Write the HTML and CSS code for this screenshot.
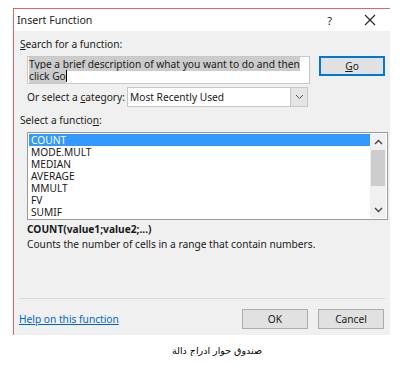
FILE: index.html
```html
<!DOCTYPE html>
<html>
<head>
<meta charset="utf-8">
<link rel="stylesheet" href="styles.css">
</head>
<body>
<div class="dialog">
  <div class="titlebar">
    <span class="title">Insert Function</span>
    <span class="help">?</span>
    <svg class="close" width="12" height="12" viewBox="0 0 12 12"><path d="M1 1 L11 11 M11 1 L1 11" stroke="#222" stroke-width="1.1" fill="none"/></svg>
  </div>
  <div class="content">
    <div class="label"><u>S</u>earch for a function:</div>
    <div class="search-row">
      <div class="textarea"><span class="sel">Type a brief description of what you want to do and then</span><br><span class="sel">click Go</span><span class="caret"></span></div>
      <div class="btn btn-default"><u>G</u>o</div>
    </div>
    <div class="cat-row">
      <span class="cat-label">Or select a <u>c</u>ategory:</span>
      <div class="select">
        <span class="select-text">Most Recently Used</span>
        <span class="select-arrow"><svg width="9" height="6" viewBox="0 0 9 6"><path d="M1 1 L4.5 4.5 L8 1" stroke="#555" stroke-width="1" fill="none"/></svg></span>
      </div>
    </div>
    <div class="label label2">Select a functio<u>n</u>:</div>
    <div class="listbox">
      <div class="items">
        <div class="item selected">COUNT</div>
        <div class="item">MODE.MULT</div>
        <div class="item">MEDIAN</div>
        <div class="item">AVERAGE</div>
        <div class="item">MMULT</div>
        <div class="item">FV</div>
        <div class="item">SUMIF</div>
      </div>
      <div class="scrollbar">
        <svg class="arrow" width="9" height="6" viewBox="0 0 9 6"><path d="M1 5 L4.5 1.5 L8 5" stroke="#444" stroke-width="1.4" fill="none"/></svg>
        <div class="track"><div class="thumb"></div></div>
        <svg class="arrow" width="9" height="6" viewBox="0 0 9 6"><path d="M1 1 L4.5 4.5 L8 1" stroke="#444" stroke-width="1.4" fill="none"/></svg>
      </div>
    </div>
    <div class="signature">COUNT(value1;value2;...)</div>
    <div class="desc">Counts the number of cells in a range that contain numbers.</div>
    <div class="spacer"></div>
    <div class="separator"></div>
    <div class="footer">
      <a class="link" href="#">Help on this function</a>
      <div class="buttons">
        <div class="btn">OK</div>
        <div class="btn">Cancel</div>
      </div>
    </div>
  </div>
</div>
<div class="caption">صندوق حوار ادراج دالة</div>
</body>
</html>
```

FILE: styles.css
```css
html, body {
  margin: 0;
  padding: 0;
  background: #ffffff;
}
body {
  font-family: "Noto Sans", "Open Sans", sans-serif;
  font-size: 10.2px;
  color: #1a1a1a;
}
.dialog {
  margin: 8px 0 0 13px;
  width: 376px;
  height: 326px;
  border-top: 1px solid #e06666;
  border-left: 1px solid #e06666;
  display: flex;
  flex-direction: column;
}
.titlebar {
  height: 22px;
  background: #ffffff;
  display: flex;
  align-items: center;
  padding-left: 3px;
}
.title {
  font-size: 10.6px;
  flex: 1;
}
.help {
  font-size: 11px;
  margin-right: 32px;
}
.close {
  margin-right: 14px;
}
.content {
  flex: 1;
  background: #f0f0f0;
  padding: 0 5px 0 5px;
  display: flex;
  flex-direction: column;
}
.label {
  line-height: 14px;
  margin-top: 6px;
  padding-left: 1px;
}
.label2 {
  margin-top: 6px;
}
.search-row {
  display: flex;
  align-items: flex-start;
  margin-top: 5px;
  padding-left: 8px;
}
.textarea {
  width: 280px;
  background: #ffffff;
  border: 1px solid #c8c8c8;
  line-height: 12px;
  padding: 1px 0 0 1px;
  height: 25px;
  white-space: nowrap;
  overflow: hidden;
}
.sel {
  background: #cccccc;
}
.caret {
  display: inline-block;
  width: 1px;
  height: 12px;
  background: #000;
  vertical-align: -2px;
}
.btn {
  width: 64px;
  height: 18px;
  border: 1px solid #adadad;
  background: #e1e1e1;
  text-align: center;
  line-height: 18px;
}
.btn-default {
  margin-left: 9px;
  border: 2px solid #0078d7;
  width: 62px;
  height: 16px;
  line-height: 16px;
}
.cat-row {
  display: flex;
  align-items: center;
  margin-top: 3px;
  padding-left: 8px;
}
.cat-label {
  flex: none;
  white-space: nowrap;
  margin-right: 2px;
}
.select {
  flex: none;
  width: 179px;
  height: 18px;
  border: 1px solid #c8c8c8;
  background: #ffffff;
  display: flex;
  align-items: center;
}
.select-text {
  flex: 1;
  padding-left: 2px;
}
.select-arrow {
  width: 16px;
  height: 18px;
  background: #e5e5e5;
  border-left: 1px solid #c8c8c8;
  display: flex;
  align-items: center;
  justify-content: center;
}
.listbox {
  margin: 5px 0 0 8px;
  width: 357px;
  height: 84px;
  border: 1px solid #9a9a9a;
  background: #ffffff;
  display: flex;
  padding: 1px;
}
.items {
  flex: 1;
}
.item {
  height: 12px;
  line-height: 12px;
  padding-left: 2px;
}
.selected {
  background: #3399ff;
  color: #ffffff;
}
.scrollbar {
  width: 16px;
  background: #f0f0f0;
  display: flex;
  flex-direction: column;
  align-items: center;
}
.arrow {
  margin: 5px 0 4px;
}
.scrollbar .arrow:last-child {
  margin: 4px 0 5px;
}
.track {
  flex: 1;
  width: 100%;
  padding-top: 1px;
}
.thumb {
  margin: 0 1px;
  height: 36px;
  background: #cdcdcd;
}
.signature {
  font-weight: bold;
  line-height: 14px;
  margin-top: 2px;
  padding-left: 8px;
}
.desc {
  line-height: 14px;
  margin-top: 1px;
  padding-left: 8px;
}
.spacer {
  flex: 1;
}
.separator {
  height: 1px;
  background: #d9d9d9;
  margin-bottom: 10px;
}
.footer {
  display: flex;
  align-items: center;
  justify-content: space-between;
  margin-bottom: 6px;
}
.link {
  color: #0066cc;
  text-decoration: underline;
  line-height: 14px;
}
.buttons {
  display: flex;
  gap: 10px;
  margin-right: 1px;
}
.caption {
  text-align: center;
  font-family: "DejaVu Sans", sans-serif;
  font-size: 9.5px;
  margin-top: 10px;
  padding-left: 14px;
  width: 406px;
  color: #000;
}
```
